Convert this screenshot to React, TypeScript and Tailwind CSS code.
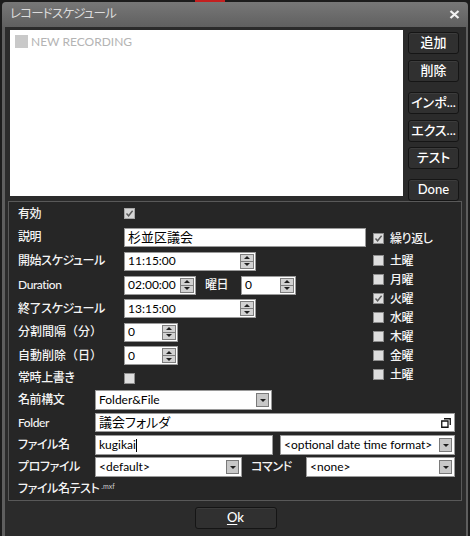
import React from "react";

const FONT = "font-['Lato','Noto_Sans_CJK_JP',sans-serif] [font-feature-settings:'palt']";

function Tri({ up }: { up?: boolean }) {
  return up ? (
    <div className="w-0 h-0 border-x-[3px] border-x-transparent border-b-[3px] border-b-[#1e1e1e]" />
  ) : (
    <div className="w-0 h-0 border-x-[3px] border-x-transparent border-t-[3px] border-t-[#1e1e1e]" />
  );
}

function Spin() {
  return (
    <div className="flex flex-col w-[14px] h-[15px] border border-[#7d7d7d] bg-[#d2d2d2] shrink-0">
      <div className="flex-1 flex items-center justify-center border-b border-[#7d7d7d]">
        <Tri up />
      </div>
      <div className="flex-1 flex items-center justify-center">
        <Tri />
      </div>
    </div>
  );
}

function SpinInput({ w, value }: { w: string; value: string }) {
  return (
    <div className={`flex items-center ${w} h-[19px] bg-white border border-[#9a9a9a] pl-[3px] pr-[1px]`}>
      <span className="flex-1 text-[12px] leading-none text-black">{value}</span>
      <Spin />
    </div>
  );
}

function DropBtn() {
  return (
    <div className="w-[13px] h-[14px] border border-[#7a7a7a] bg-[#c8c8c8] flex items-center justify-center shrink-0">
      <div className="w-0 h-0 border-x-[3px] border-x-transparent border-t-[3px] border-t-[#1e1e1e]" />
    </div>
  );
}

function Select({ w, value }: { w: string; value: string }) {
  return (
    <div className={`flex items-center ${w} h-[20px] bg-white border border-[#9a9a9a] pl-[3px] pr-[2px]`}>
      <span className="flex-1 text-[12px] leading-none text-black whitespace-nowrap">{value}</span>
      <DropBtn />
    </div>
  );
}

function Check({ checked, dim }: { checked?: boolean; dim?: boolean }) {
  return (
    <div
      className={`w-[11px] h-[11px] border ${dim ? "border-[#a8a8a8] bg-[#d6d6d6]" : "border-[#8e8e8e] bg-[#dedede]"} flex items-center justify-center shrink-0`}
    >
      {checked && (
        <svg width="9" height="9" viewBox="0 0 9 9">
          <path d="M1.5 4.5 L3.6 6.8 L7.6 1.8" fill="none" stroke="#5a5a5a" strokeWidth="1.4" />
        </svg>
      )}
    </div>
  );
}

function Btn({ children, className = "" }: { children: React.ReactNode; className?: string }) {
  return (
    <div
      className={`w-[51px] h-[24px] rounded-[3px] border border-[#151515] bg-[#303030] shadow-[inset_0_1px_0_#3c3c3c] flex items-center justify-center text-[13px] font-medium text-white ${className}`}
    >
      {children}
    </div>
  );
}

function Label({ children, w, full }: { children: React.ReactNode; w: string; full?: boolean }) {
  return (
    <div
      className={`${w} shrink-0 text-[12px] font-medium tracking-[-0.4px] text-[#f4f4f4] leading-none whitespace-nowrap ${full ? "[font-feature-settings:normal] tracking-normal" : ""}`}
    >
      {children}
    </div>
  );
}

const TXT = "text-[12px] font-medium tracking-[-0.4px] text-[#f4f4f4] leading-none";

export default function App() {
  return (
    <div className={`w-[470px] h-[536px] bg-[#1c1c1c] overflow-hidden ${FONT}`}>
      <div className="h-[2px] flex">
        <div className="ml-[195px] w-[30px] h-full bg-[#c42020]" />
      </div>
      <div className="ml-[2px] w-[466px] h-[534px] flex flex-col">
        {/* title bar */}
        <div className="h-[25px] rounded-t-[4px] bg-gradient-to-b from-[#777777] to-[#606060] flex items-center pl-[8px] pr-[8px]">
          <span className="flex-1 text-[12.5px] tracking-[-0.8px] text-[#dcdcdc]">レコードスケジュール</span>
          <svg width="11" height="9" viewBox="0 0 11 9">
            <path d="M1.5 1 L9.5 8 M9.5 1 L1.5 8" stroke="#f2f2f2" strokeWidth="2.3" />
          </svg>
        </div>
        {/* body */}
        <div className="flex-1 flex flex-col bg-[#2b2b2b] border-l-[3px] border-r-[2px] border-[#5e5e5e] pt-[3px]">
          <div className="flex h-[171px] pl-[5px] pr-[7px] gap-[5px]">
            <div className="w-[393px] h-[166px] bg-white pl-[5px] pt-[5px]">
              <div className="flex items-center gap-[3px]">
                <div className="w-[13px] h-[13px] bg-[#c9c9c9]" />
                <span className="text-[12px] leading-none text-[#b4b4b4]">NEW RECORDING</span>
              </div>
            </div>
            <div className="relative z-10 flex flex-col w-[51px] pt-[2px]">
              <Btn>追加</Btn>
              <Btn className="mt-[6px]">削除</Btn>
              <Btn className="mt-[10px]">インポ...</Btn>
              <Btn className="mt-[6px]">エクス...</Btn>
              <Btn className="mt-[5px]">テスト</Btn>
              <Btn className="mt-[10px]">Done</Btn>
            </div>
          </div>

          {/* panel */}
          <div className="ml-[3px] mr-[4px] h-[300px] border border-[#595959] bg-[#262626] pl-[9px] pr-[6px] flex flex-col">
            <div className="flex h-[187px] gap-[7px]">
              <div className="w-[348px] flex flex-col">
                <div className="h-[23px] flex items-center">
                  <Label w="w-[106px]">有効</Label>
                  <Check checked dim />
                </div>
                <div className="h-[24px] flex items-center">
                  <Label w="w-[106px]">説明</Label>
                  <div className="w-[242px] h-[19px] bg-white border border-[#9a9a9a] pl-[3px] flex items-center text-[13px] text-black leading-none">
                    杉並区議会
                  </div>
                </div>
                <div className="h-[24px] flex items-center">
                  <Label w="w-[106px]">開始スケジュール</Label>
                  <SpinInput w="w-[132px]" value="11:15:00" />
                </div>
                <div className="h-[24px] flex items-center">
                  <Label w="w-[106px]">Duration</Label>
                  <SpinInput w="w-[72px]" value="02:00:00" />
                  <span className={`ml-[9px] w-[36px] ${TXT}`}>曜日</span>
                  <SpinInput w="w-[55px]" value="0" />
                </div>
                <div className="h-[23px] flex items-center">
                  <Label w="w-[106px]">終了スケジュール</Label>
                  <SpinInput w="w-[132px]" value="13:15:00" />
                </div>
                <div className="h-[24px] flex items-center">
                  <Label w="w-[106px]" full>分割間隔（分）</Label>
                  <SpinInput w="w-[54px]" value="0" />
                </div>
                <div className="h-[23px] flex items-center">
                  <Label w="w-[106px]" full>自動削除（日）</Label>
                  <SpinInput w="w-[54px]" value="0" />
                </div>
                <div className="h-[22px] flex items-center">
                  <Label w="w-[106px]">常時上書き</Label>
                  <Check />
                </div>
              </div>
              <div className="flex flex-col pt-[27px]">
                <div className="h-[19px] flex items-center gap-[6px]">
                  <Check checked />
                  <span className={TXT}>繰り返し</span>
                </div>
                <div className="mt-[3px] flex flex-col">
                  {[
                    ["土曜", false],
                    ["月曜", false],
                    ["火曜", true],
                    ["水曜", false],
                    ["木曜", false],
                    ["金曜", false],
                    ["土曜", false],
                  ].map(([d, c], i) => (
                    <div key={i} className="h-[19px] flex items-center gap-[6px]">
                      <Check checked={c as boolean} />
                      <span className={TXT}>{d as string}</span>
                    </div>
                  ))}
                </div>
              </div>
            </div>

            <div className="h-[22px] flex items-center">
              <Label w="w-[77px]">名前構文</Label>
              <Select w="w-[177px]" value="Folder&File" />
            </div>
            <div className="h-[23px] flex items-center">
              <Label w="w-[77px]">Folder</Label>
              <div className="w-[360px] h-[19px] bg-white border border-[#9a9a9a] pl-[3px] pr-[3px] flex items-center">
                <span className="flex-1 text-[13px] text-black leading-none">議会フォルダ</span>
                <svg width="10" height="10" viewBox="0 0 10 10">
                  <path d="M3 0.75 H9.25 V7 M0.75 3 H7 V9.25 H0.75 Z M2.6 3 V2.3" fill="none" stroke="#111" strokeWidth="1.3" />
                </svg>
              </div>
            </div>
            <div className="h-[22px] flex items-center">
              <Label w="w-[77px]">ファイル名</Label>
              <div className="w-[178px] h-[20px] bg-white border border-[#9a9a9a] pl-[3px] flex items-center">
                <span className="text-[12px] text-black leading-none">kugikai</span>
                <span className="w-[1px] h-[13px] bg-black" />
              </div>
              <div className="ml-[7px]">
                <Select w="w-[175px]" value="<optional date time format>" />
              </div>
            </div>
            <div className="h-[22px] flex items-center">
              <Label w="w-[77px]">プロファイル</Label>
              <Select w="w-[147px]" value="<default>" />
              <span className={`ml-[9px] w-[55px] ${TXT}`}>コマンド</span>
              <Select w="w-[149px]" value="<none>" />
            </div>
            <div className="h-[22px] flex items-center">
              <span className={TXT}>ファイル名テスト</span>
              <span className="ml-[2px] -mt-[6px] text-[7px] text-[#cfcfcf] leading-none">.mxf</span>
            </div>
          </div>

          <div className="flex justify-center pt-[6px]">
            <div className="w-[82px] h-[22px] rounded-[3px] border border-[#151515] bg-[#303030] shadow-[inset_0_1px_0_#3c3c3c] flex items-center justify-center text-[13px] font-medium text-white">
              <span className="underline underline-offset-2">O</span>k
            </div>
          </div>
        </div>
      </div>
    </div>
  );
}
